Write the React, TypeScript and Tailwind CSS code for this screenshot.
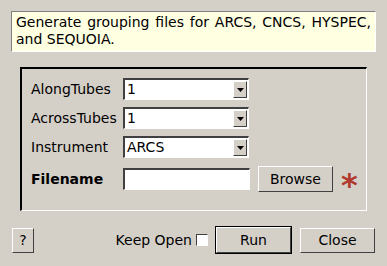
import React from 'react'

const font = { fontFamily: '"DejaVu Sans", Verdana, sans-serif' }

const Combo = ({ value }: { value: string }) => (
	<div className="flex h-[22px] w-[126px] border-t-2 border-l-2 border-t-[#404040] border-l-[#404040] border-b border-r border-b-white border-r-white bg-white">
		<div className="flex-1 pl-[2px] text-[14px] leading-[19px] text-black">{value}</div>
		<div className="my-[1px] mr-[1px] flex w-[14px] items-center justify-center border border-t-white border-l-white border-b-[#404040] border-r-[#404040] bg-[#d4d0c8]">
			<svg width="7" height="4" viewBox="0 0 7 4">
				<path d="M0 0h7L3.5 4z" fill="#000" />
			</svg>
		</div>
	</div>
)

const Button = ({ label, className = '' }: { label: string; className?: string }) => (
	<div
		className={`flex items-center justify-center border border-t-white border-l-white border-b-[#404040] border-r-[#404040] bg-[#d4d0c8] text-[14px] text-black ${className}`}
	>
		{label}
	</div>
)

const rows = [
	{ label: 'AlongTubes', value: '1' },
	{ label: 'AcrossTubes', value: '1' },
	{ label: 'Instrument', value: 'ARCS' },
]

export default function App() {
	return (
		<div className="h-[266px] w-[387px] bg-[#d4d0c8] pt-[11px] pl-[11px] text-black" style={font}>
			<div className="h-[41px] w-[365px] border-t border-l border-t-[#808080] border-l-[#808080] border-b border-r border-b-white border-r-white bg-[#ffffe1] px-[4px] pt-[2px] text-justify text-[14px] leading-[17px]">
				Generate grouping files for ARCS, CNCS, HYSPEC, and SEQUOIA.
			</div>

			<div className="mt-[15px] ml-[9px] h-[144px] w-[347px] border-t-2 border-l-2 border-t-black border-l-black border-b border-r border-b-white border-r-white pt-[9px] pl-[9px]">
				<div className="flex flex-col gap-[7px]">
					{rows.map((r) => (
						<div key={r.label} className="flex items-center">
							<div className="w-[92px] text-[14px]">{r.label}</div>
							<Combo value={r.value} />
						</div>
					))}
				</div>
				<div className="mt-[8px] flex items-center">
					<div className="w-[92px] text-[14px] font-bold">Filename</div>
					<div className="h-[22px] w-[127px] border-t-2 border-l-2 border-t-[#404040] border-l-[#404040] border-b border-r border-b-white border-r-white bg-white" />
					<Button label="Browse" className="ml-[8px] h-[26px] w-[75px]" />
					<span className="ml-[8px] block h-[26px] text-[32px] leading-[38px] font-bold text-[#b03a2e]">*</span>
				</div>
			</div>

			<div className="mt-[15px] flex items-center pr-[12px]">
				<Button label="?" className="ml-[1px] h-[25px] w-[22px]" />
				<div className="ml-auto flex items-center">
					<span className="text-[14px]">Keep Open</span>
					<div className="ml-[4px] h-[12px] w-[12px] border border-t-[#404040] border-l-[#404040] border-b-white border-r-white bg-white" />
					<div className="ml-[7px] border border-black">
						<Button label="Run" className="h-[26px] w-[75px]" />
					</div>
					<Button label="Close" className="ml-[8px] h-[25px] w-[75px]" />
				</div>
			</div>
		</div>
	)
}
